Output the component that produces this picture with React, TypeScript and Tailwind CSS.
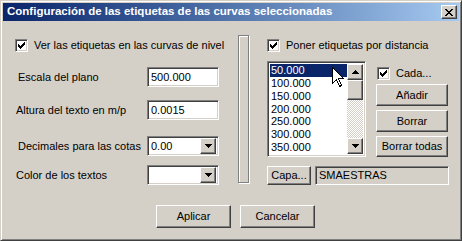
import React from 'react';

const raised =
  'border border-t-white border-l-white border-r-[#404040] border-b-[#404040] shadow-[inset_-1px_-1px_0_#808080]';
const sunken =
  'border border-t-[#808080] border-l-[#808080] border-r-white border-b-white shadow-[inset_1px_1px_0_#404040,inset_-1px_-1px_0_#d4d0c8]';

const CheckMark = () => (
  <svg width="7" height="7" viewBox="0 0 7 7" shapeRendering="crispEdges">
    <path
      d="M6 0h1v1h-1zM5 1h2v1h-2zM0 2h1v1h-1zM4 2h3v1h-3zM0 3h2v1h-2zM3 3h3v1h-3zM0 4h5v1h-5zM1 5h3v1h-3zM2 6h1v1h-1z"
      fill="#000"
    />
  </svg>
);

const Checkbox = ({ label }: { label: string }) => (
  <div className="flex items-center h-[13px]">
    <div className={`w-[13px] h-[13px] bg-white flex items-center justify-center ${sunken}`}>
      <CheckMark />
    </div>
    <span className="ml-[6px] leading-none">{label}</span>
  </div>
);

const Arrow = ({ up = false }: { up?: boolean }) => (
  <svg width="7" height="4" viewBox="0 0 7 4" shapeRendering="crispEdges">
    <path
      d={up ? 'M3 0h1v1h-1zM2 1h3v1h-3zM1 2h5v1h-5zM0 3h7v1h-7z' : 'M0 0h7v1h-7zM1 1h5v1h-5zM2 2h3v1h-3zM3 3h1v1h-1z'}
      fill="#000"
    />
  </svg>
);

const Button = ({ label, className = '' }: { label: string; className?: string }) => (
  <div className={`flex items-center justify-center bg-[#d4d0c8] ${raised} ${className}`}>
    <span className="leading-none">{label}</span>
  </div>
);

const FormRow = ({
  label,
  children,
  mt,
  indent = 'pl-[2px]',
}: {
  label: string;
  children: React.ReactNode;
  mt: string;
  indent?: string;
}) => (
  <div className={`flex items-center h-[20px] ${mt}`}>
    <span className={`w-[132px] leading-none ${indent}`}>{label}</span>
    {children}
  </div>
);

const TextBox = ({ value }: { value: string }) => (
  <div className={`w-[72px] h-[20px] bg-white flex items-center pl-[3px] ${sunken}`}>
    <span className="leading-none">{value}</span>
  </div>
);

const Combo = ({ value }: { value: string }) => (
  <div className={`w-[72px] h-[20px] bg-white flex items-center justify-between p-[2px] ${sunken}`}>
    <span className="leading-none pl-[1px]">{value}</span>
    <div className={`w-[16px] h-[16px] flex items-center justify-center bg-[#d4d0c8] ${raised}`}>
      <Arrow />
    </div>
  </div>
);

const items = ['50.000', '100.000', '150.000', '200.000', '250.000', '300.000', '350.000'];

export default function App() {
  return (
    <div
      className="w-[462px] h-[241px] bg-[#d4d0c8] text-black text-[11px] font-['Liberation_Sans',Arial,sans-serif] flex flex-col border border-t-[#d4d0c8] border-l-[#d4d0c8] border-r-[#404040] border-b-[#404040] shadow-[inset_1px_1px_0_white,inset_-1px_-1px_0_#808080]"
    >
      {/* title bar */}
      <div className="mx-[2px] mt-[2px] h-[18px] flex items-center justify-between pl-[4px] pr-[2px] bg-gradient-to-r from-[#0a246a] to-[#a6caf0]">
        <span className="text-white font-bold text-[11.5px] leading-none font-['Liberation_Sans',Arial,sans-serif]">
          Configuración de las etiquetas de las curvas seleccionadas
        </span>
        <div className={`w-[16px] h-[14px] flex items-center justify-center bg-[#d4d0c8] ${raised}`}>
          <svg width="8" height="7" viewBox="0 0 8 7" shapeRendering="crispEdges">
            <path
              d="M0 0h2v1h-2zM6 0h2v1h-2zM1 1h2v1h-2zM5 1h2v1h-2zM2 2h4v1h-4zM3 3h2v1h-2zM2 4h4v1h-4zM1 5h2v1h-2zM5 5h2v1h-2zM0 6h2v1h-2zM6 6h2v1h-2z"
              fill="#000"
            />
          </svg>
        </div>
      </div>

      <div className="flex">
        {/* left column */}
        <div className="w-[237px] pl-[14px] pt-[18px] flex flex-col">
          <Checkbox label="Ver las etiquetas en las curvas de nivel" />
          <FormRow label="Escala del plano" mt="mt-[15px]" indent="pl-[3px]">
            <TextBox value="500.000" />
          </FormRow>
          <FormRow label="Altura del texto en m/p" mt="mt-[13px]" indent="pl-[1px]">
            <TextBox value="0.0015" />
          </FormRow>
          <FormRow label="Decimales para las cotas" mt="mt-[16px]" indent="pl-[3px]">
            <Combo value="0.00" />
          </FormRow>
          <FormRow label="Color de los textos" mt="mt-[9px]" indent="pl-[1px]">
            <Combo value="" />
          </FormRow>
        </div>

        {/* separator */}
        <div className="mt-[14px] w-[11px] h-[148px] border border-[#808080] shadow-[inset_1px_1px_0_white,1px_1px_0_white]" />

        {/* right column */}
        <div className="pl-[18px] pt-[18px] flex flex-col">
          <Checkbox label="Poner etiquetas por distancia" />
          <div className="flex mt-[9px]">
            <div className={`relative w-[99px] h-[96px] bg-white flex p-[2px] ${sunken}`}>
              <div className="flex-1 flex flex-col">
                {items.map((it, i) => (
                  <div
                    key={it}
                    className={`h-[13px] flex items-center pl-[1px] ${i === 0 ? 'bg-[#0a246a] text-white' : ''}`}
                  >
                    <span className="leading-none">{it}</span>
                  </div>
                ))}
              </div>
              {/* scrollbar */}
              <div className="w-[16px] flex flex-col bg-[repeating-conic-gradient(#ffffff_0_25%,#d4d0c8_0_50%)] bg-[length:2px_2px]">
                <div className={`h-[16px] flex items-center justify-center bg-[#d4d0c8] ${raised}`}>
                  <Arrow up />
                </div>
                <div className={`h-[20px] bg-[#d4d0c8] ${raised}`} />
                <div className="flex-1" />
                <div className={`h-[16px] flex items-center justify-center bg-[#d4d0c8] ${raised}`}>
                  <Arrow />
                </div>
              </div>
              {/* mouse cursor */}
              <svg
                className="absolute left-[64px] top-[5px]"
                width="13"
                height="21"
                viewBox="0 0 13 21"
                shapeRendering="crispEdges"
              >
                <path d="M0.5 0.5V16.5L4.5 12.5L7.5 19.5L9.5 18.5L6.5 11.5H11.5Z" fill="#fff" stroke="#000" strokeWidth="1" />
              </svg>
            </div>
            <div className="ml-[10px] flex flex-col">
              <div className="mt-[6px] ml-[1px]">
                <Checkbox label="Cada..." />
              </div>
              <Button label="Añadir" className="mt-[4px] w-[72px] h-[22px]" />
              <Button label="Borrar" className="mt-[4px] w-[72px] h-[22px]" />
              <Button label="Borrar todas" className="mt-[4px] w-[72px] h-[21px]" />
            </div>
          </div>
          <div className="flex mt-[9px]">
            <Button label="Capa..." className="w-[44px] h-[19px]" />
            <div className={`ml-[4px] w-[134px] h-[19px] flex items-center pl-[3px] bg-[#d4d0c8] ${sunken}`}>
              <span className="leading-none">SMAESTRAS</span>
            </div>
          </div>
        </div>
      </div>

      {/* bottom buttons */}
      <div className="flex pl-[155px] mt-[20px] gap-[9px]">
        <Button label="Aplicar" className="w-[75px] h-[23px]" />
        <Button label="Cancelar" className="w-[75px] h-[23px]" />
      </div>
    </div>
  );
}
